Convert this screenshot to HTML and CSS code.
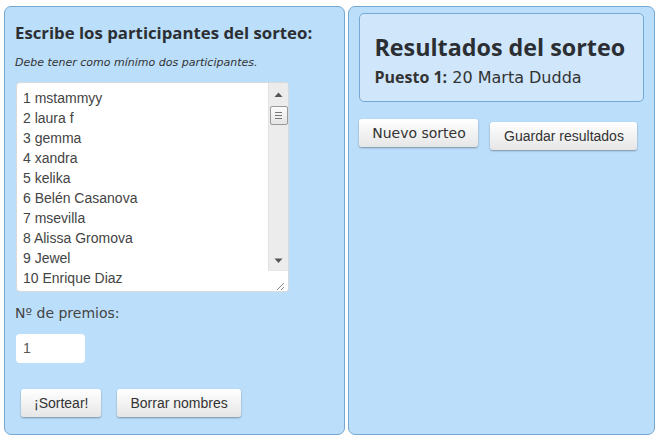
FILE: index.html
```html
<!DOCTYPE html>
<html lang="es">
  <head>
    <meta charset="UTF-8" />
    <title>Sorteo</title>
    <link rel="stylesheet" href="styles.css">
  </head>
  <body>
    <!-- Participantes -->
    <div class="panel panel-left">
      <div class="title">Escribe los participantes del sorteo:</div>
      <div class="hint">Debe tener como mínimo dos participantes.</div>

      <div class="names-box">
        <div class="names">
          <div>1 mstammyy</div>
          <div>2 laura f</div>
          <div>3 gemma</div>
          <div>4 xandra</div>
          <div>5 kelika</div>
          <div>6 Belén Casanova</div>
          <div>7 msevilla</div>
          <div>8 Alissa Gromova</div>
          <div>9 Jewel</div>
          <div>10 Enrique Diaz</div>
        </div>
        <div class="scroll-col">
          <div class="scrollbar">
            <svg class="arrow" width="17" height="19" viewBox="0 0 17 19"><path d="M4.5 12 L8.5 7.5 L12.5 12 Z" fill="#555"/></svg>
            <div class="thumb">
              <svg width="15" height="17" viewBox="0 0 15 17"><path d="M4 5.5h7M4 8.5h7M4 11.5h7" stroke="#777" stroke-width="1"/></svg>
            </div>
            <div class="track"></div>
            <svg class="arrow" width="17" height="19" viewBox="0 0 17 19"><path d="M4.5 7.5 L8.5 12 L12.5 7.5 Z" fill="#555"/></svg>
          </div>
          <div class="grip">
            <svg width="19" height="20" viewBox="0 0 19 20"><path d="M16 12 L9 19 M16 16 L13 19" stroke="#888" stroke-width="1"/></svg>
          </div>
        </div>
      </div>

      <div class="label">Nº de premios:</div>
      <div class="prize-input">1</div>

      <div class="actions">
        <button class="btn">¡Sortear!</button>
        <button class="btn">Borrar nombres</button>
      </div>
    </div>

    <!-- Resultados -->
    <div class="panel panel-right">
      <div class="results">
        <div class="results-title">Resultados del sorteo</div>
        <div class="result-row"><b>Puesto 1:</b> 20 Marta Dudda</div>
      </div>
      <div class="result-actions">
        <button class="btn btn-verdana">Nuevo sorteo</button>
        <button class="btn btn-low">Guardar resultados</button>
      </div>
    </div>
  </body>
</html>
```
FILE: styles.css
```css
body {
  margin: 6px 4px 0 4px;
  display: flex;
  gap: 3px;
  font-family: "Liberation Sans", Arial, sans-serif;
  background: #ffffff;
  color: #333;
}

.panel {
  box-sizing: border-box;
  height: 429px;
  background-color: #bbdefa;
  border: 1px solid #75a8d2;
  border-radius: 7px;
}

.panel-left {
  width: 342px;
  padding: 15px 10px 0 10px;
}

.panel-right {
  width: 307px;
  padding: 6px 10px 0 10px;
}

.title {
  font-family: "Open Sans", sans-serif;
  font-weight: bold;
  font-size: 16.8px;
  color: #2b2f33;
  line-height: 22px;
  white-space: nowrap;
}

.hint {
  font-family: "DejaVu Sans", Verdana, sans-serif;
  font-style: italic;
  font-size: 11px;
  color: #333;
  margin-top: 11px;
  line-height: 15px;
}

.names-box {
  margin: 12px 0 0 1px;
  width: 273px;
  height: 210px;
  box-sizing: border-box;
  background: #fff;
  border: 1px solid #d9d9d9;
  border-radius: 4px;
  display: flex;
  overflow: hidden;
}

.names {
  flex: 1;
  padding: 5px 6px;
  font-size: 14px;
  line-height: 20px;
  color: #444;
  overflow: hidden;
}

.scroll-col {
  width: 20px;
  display: flex;
  flex-direction: column;
}

.scrollbar {
  flex: 1;
  background: #ececec;
  border-left: 1px solid #e2e2e2;
  display: flex;
  flex-direction: column;
  align-items: center;
  padding-top: 2px;
}

.arrow {
  display: block;
}

.thumb {
  box-sizing: border-box;
  width: 18px;
  height: 19px;
  margin-top: 2px;
  border: 1px solid #9a9a9a;
  border-radius: 2px;
  background: linear-gradient(#fbfbfb, #e4e4e4);
  display: flex;
  justify-content: center;
  align-items: center;
}

.track {
  flex: 1;
}

.grip {
  height: 20px;
  background: #fff;
  border-top: 1px solid #e6e6e6;
}

.label {
  font-family: "DejaVu Sans", Verdana, sans-serif;
  font-size: 14px;
  color: #444;
  margin-top: 13px;
}

.prize-input {
  box-sizing: border-box;
  margin: 13px 0 0 1px;
  width: 69px;
  height: 29px;
  background: #fff;
  border-radius: 4px;
  padding: 6px 0 0 7px;
  font-size: 14px;
  color: #555;
}

.actions {
  display: flex;
  gap: 16px;
  margin: 26px 0 0 6px;
}

.btn {
  font-family: "Liberation Sans", Arial, sans-serif;
  font-size: 14px;
  color: #333;
  height: 28px;
  padding: 0 13px;
  border: none;
  border-radius: 3px;
  background: linear-gradient(#ffffff, #e6e6e6);
  box-shadow: 0 1px 2px rgba(0, 0, 0, 0.35);
}

.results {
  background-color: #cfe6fb;
  border: 1px solid #75a8d2;
  border-radius: 5px;
  padding: 18px 0 0 14px;
  height: 89px;
  box-sizing: border-box;
}

.results-title {
  font-family: "Open Sans", sans-serif;
  font-weight: bold;
  font-size: 23.3px;
  line-height: 30px;
  color: #2b2f33;
  white-space: nowrap;
}

.result-row {
  font-family: "DejaVu Sans", Verdana, sans-serif;
  font-size: 16px;
  color: #333;
  margin-top: 4px;
  white-space: nowrap;
}

.result-row b {
  font-family: "Open Sans", sans-serif;
}

.result-actions {
  display: flex;
  align-items: flex-start;
  gap: 12px;
  margin-top: 17px;
}

.btn-verdana {
  font-family: "DejaVu Sans", Verdana, sans-serif;
  font-size: 14px;
  width: 119px;
  padding: 0;
}

.btn-low {
  margin-top: 3px;
  width: 147px;
}
```
